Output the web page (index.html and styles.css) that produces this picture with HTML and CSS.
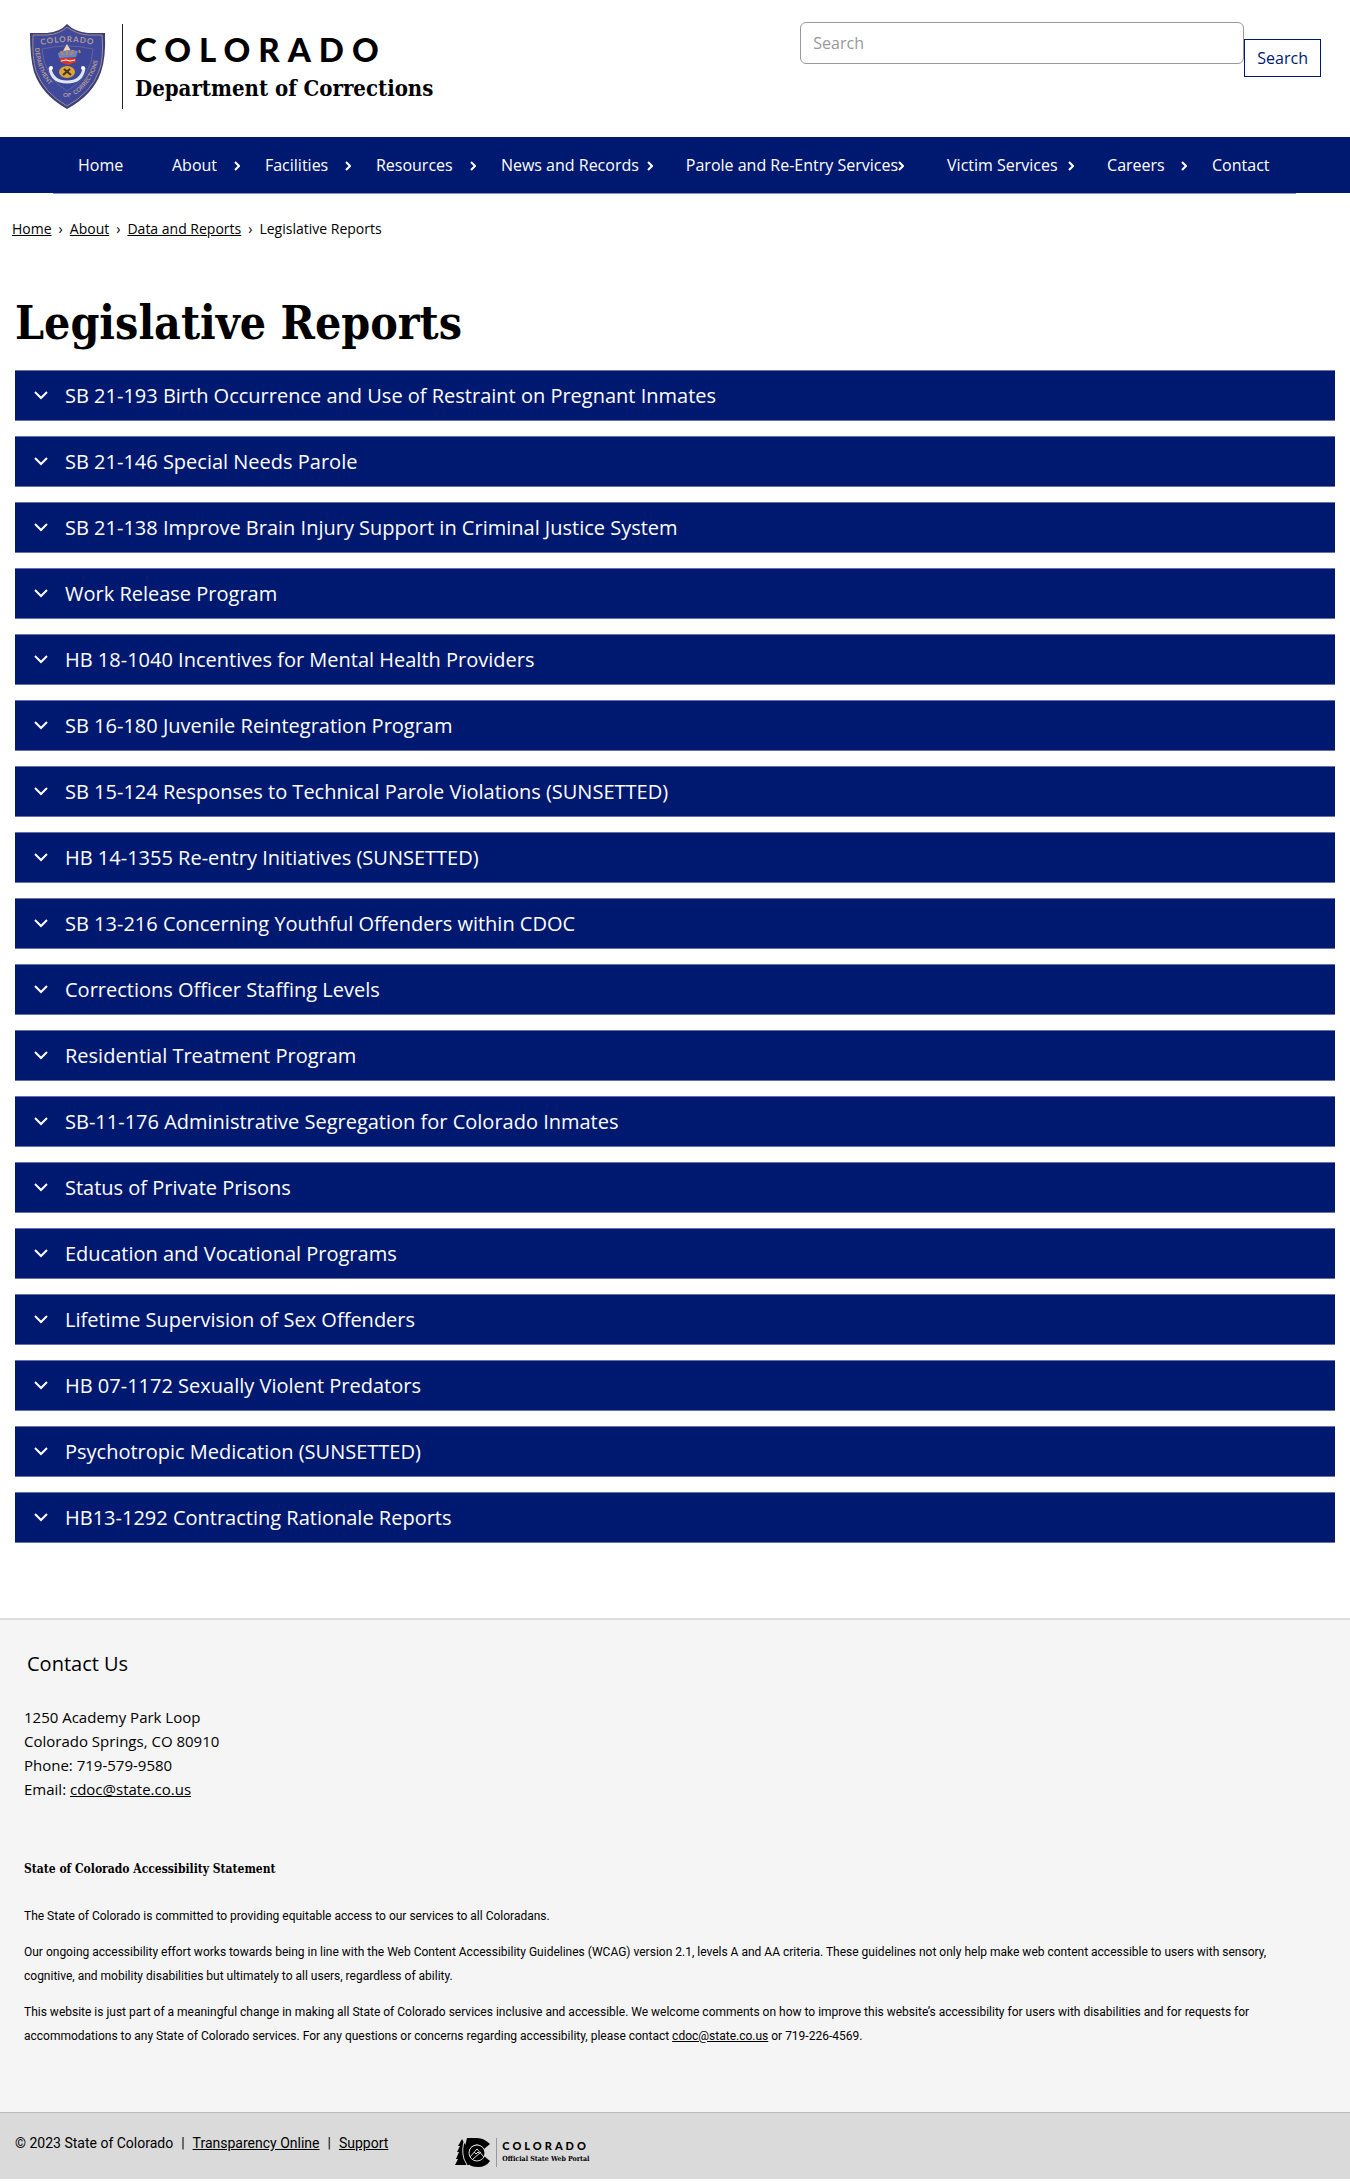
FILE: index.html
```html
<!DOCTYPE html>
<html lang="en">
<head>
<meta charset="utf-8">
<meta name="viewport" content="width=device-width, initial-scale=1">
<title>Legislative Reports | Department of Corrections</title>
<link rel="stylesheet" href="styles.css">
</head>
<body>
<svg width="0" height="0" class="sprite" aria-hidden="true">
  <symbol id="right" viewBox="0 0 6 10"><path d="M1 1l4 4-4 4" fill="none" stroke="currentColor" stroke-width="2"/></symbol>
  <symbol id="down" viewBox="0 0 14 9"><path d="M1 1l6 6 6-6" fill="none" stroke="currentColor" stroke-width="2"/></symbol>
</svg>

<header class="header">
  <a class="brand" href="#">
    <svg class="shield" viewBox="30 24 76 86" aria-hidden="true">
      <defs>
        <path id="arc-top" d="M41 45Q67 39 95 45"/>
        <path id="arc-left" d="M35 48Q37 79 61 95"/>
        <path id="arc-right" d="M75 95Q98 79 100 47"/>
      </defs>
      <path d="M67 24Q75 32 88 33H105Q106 58 101 72Q93 95 67 109Q42 95 34 72Q30 58 30 33H47Q60 32 67 24Z" fill="#3b3f7d"/>
      <path d="M67 27Q76 34 88 35H102Q104 58 99 71Q91 93 67 106Q44 93 36 71Q32 58 33 35H47Q60 34 67 27Z" fill="#3f4a9d" stroke="#a58a86" stroke-width="1"/>
      <path d="M42 49Q67 43 93 49Q92 77 67 91Q44 77 42 49Z" fill="#3d4799" stroke="#68629b" stroke-width="1"/>
      <g class="shield-text">
        <text><textPath href="#arc-top">COLORADO</textPath></text>
        <text class="shield-small"><textPath href="#arc-left">DEPARTMENT</textPath></text>
        <text class="shield-small"><textPath href="#arc-right">CORRECTIONS</textPath></text>
        <text class="shield-small" x="63" y="97">OF</text>
      </g>
      <path d="M67 44l4 7h-8z" fill="#e8d7ba"/>
      <path d="M58 53q9-5 20-2l-2 6-17 1z" fill="#6f86bd"/>
      <path d="M61 51l2 4M67 50v5M73 50l-2 5M79 50l1 3" stroke="#c9814f" stroke-width="2"/>
      <path d="M60 58h16v4l-8 3-8-3z" fill="#d4392e"/>
      <path d="M61 61l5-1 4 1 5-1" stroke="#fff" stroke-width="1" fill="none"/>
      <path d="M50 68Q52 82 67 82Q82 82 84 68" fill="none" stroke="#dfe7f3" stroke-width="3"/>
      <circle cx="51" cy="68" r="2" fill="#fff"/><circle cx="83" cy="68" r="2" fill="#fff"/>
      <ellipse cx="67" cy="72" rx="8" ry="6" fill="#dda436"/>
      <path d="M63 75l7-6M71 75l-7-6" stroke="#40332d" stroke-width="2"/>
    </svg>
    <span class="brand-text">
      <span class="brand-state">COLORADO</span>
      <span class="brand-name">Department of Corrections</span>
    </span>
  </a>
  <form class="search" role="search">
    <input class="search-input" type="search" placeholder="Search" aria-label="Search">
    <button class="search-button" type="submit">Search</button>
  </form>
</header>

<nav class="nav" aria-label="Main">
  <ul class="nav-list">
    <li><a href="#">Home</a></li>
    <li><a href="#">About<svg><use href="#right"/></svg></a></li>
    <li><a href="#">Facilities<svg><use href="#right"/></svg></a></li>
    <li><a href="#">Resources<svg><use href="#right"/></svg></a></li>
    <li class="nav-long"><a href="#">News and Records<svg><use href="#right"/></svg></a></li>
    <li class="nav-longest"><a href="#">Parole and Re-Entry Services<svg><use href="#right"/></svg></a></li>
    <li class="nav-long"><a href="#">Victim Services<svg><use href="#right"/></svg></a></li>
    <li><a href="#">Careers<svg><use href="#right"/></svg></a></li>
    <li><a href="#">Contact</a></li>
  </ul>
</nav>

<nav class="breadcrumb" aria-label="Breadcrumb">
  <a href="#">Home</a><span>›</span><a href="#">About</a><span>›</span><a href="#">Data and Reports</a><span>›</span>Legislative Reports
</nav>

<main class="main">
  <h1>Legislative Reports</h1>
  <div class="accordion">
    <button type="button" aria-expanded="false"><svg><use href="#down"/></svg>SB 21-193 Birth Occurrence and Use of Restraint on Pregnant Inmates</button>
    <button type="button" aria-expanded="false"><svg><use href="#down"/></svg>SB 21-146 Special Needs Parole</button>
    <button type="button" aria-expanded="false"><svg><use href="#down"/></svg>SB 21-138 Improve Brain Injury Support in Criminal Justice System</button>
    <button type="button" aria-expanded="false"><svg><use href="#down"/></svg>Work Release Program</button>
    <button type="button" aria-expanded="false"><svg><use href="#down"/></svg>HB 18-1040 Incentives for Mental Health Providers</button>
    <button type="button" aria-expanded="false"><svg><use href="#down"/></svg>SB 16-180 Juvenile Reintegration Program</button>
    <button type="button" aria-expanded="false"><svg><use href="#down"/></svg>SB 15-124 Responses to Technical Parole Violations (SUNSETTED)</button>
    <button type="button" aria-expanded="false"><svg><use href="#down"/></svg>HB 14-1355 Re-entry Initiatives (SUNSETTED)</button>
    <button type="button" aria-expanded="false"><svg><use href="#down"/></svg>SB 13-216 Concerning Youthful Offenders within CDOC</button>
    <button type="button" aria-expanded="false"><svg><use href="#down"/></svg>Corrections Officer Staffing Levels</button>
    <button type="button" aria-expanded="false"><svg><use href="#down"/></svg>Residential Treatment Program</button>
    <button type="button" aria-expanded="false"><svg><use href="#down"/></svg>SB-11-176 Administrative Segregation for Colorado Inmates</button>
    <button type="button" aria-expanded="false"><svg><use href="#down"/></svg>Status of Private Prisons</button>
    <button type="button" aria-expanded="false"><svg><use href="#down"/></svg>Education and Vocational Programs</button>
    <button type="button" aria-expanded="false"><svg><use href="#down"/></svg>Lifetime Supervision of Sex Offenders</button>
    <button type="button" aria-expanded="false"><svg><use href="#down"/></svg>HB 07-1172 Sexually Violent Predators</button>
    <button type="button" aria-expanded="false"><svg><use href="#down"/></svg>Psychotropic Medication (SUNSETTED)</button>
    <button type="button" aria-expanded="false"><svg><use href="#down"/></svg>HB13-1292 Contracting Rationale Reports</button>
  </div>
</main>

<footer>
  <div class="footer">
    <h2>Contact Us</h2>
    <address>1250 Academy Park Loop<br>Colorado Springs, CO 80910<br>Phone: 719-579-9580<br>Email: <a href="mailto:cdoc@state.co.us">cdoc@state.co.us</a></address>
    <section class="statement">
      <h3>State of Colorado Accessibility Statement</h3>
      <p>The State of Colorado is committed to providing equitable access to our services to all Coloradans.</p>
      <p>Our ongoing accessibility effort works towards being in line with the Web Content Accessibility Guidelines (WCAG) version 2.1, levels A and AA criteria. These guidelines not only help make web content accessible to users with sensory, cognitive, and mobility disabilities but ultimately to all users, regardless of ability.</p>
      <p>This website is just part of a meaningful change in making all State of Colorado services inclusive and accessible. We welcome comments on how to improve this website’s accessibility for users with disabilities and for requests for accommodations to any State of Colorado services. For any questions or concerns regarding accessibility, please contact <a href="mailto:cdoc@state.co.us">cdoc@state.co.us</a> or 719-226-4569.</p>
    </section>
  </div>
  <div class="legal">
    <p class="legal-links">© 2023 State of Colorado<span>|</span><a href="#">Transparency Online</a><span>|</span><a href="#">Support</a></p>
    <a class="portal" href="#">
      <svg class="portal-mark" viewBox="0 0 36 29" aria-hidden="true">
        <path d="M7 1l-4 7h2l-3 6h2l-3 7h2L0 27h14l2-10z"/>
        <path d="M35 6Q29 0 22 0H12L9 12l2 12Q15 29 23 29Q31 29 35 23L29 18A8 8 0 1 1 29 11Z"/>
        <path d="M10 1Q6 11 9 21l3 6" fill="none" stroke="#dadada" stroke-width="1"/>
        <circle cx="22" cy="15" r="8" stroke="#dadada" stroke-width="1"/>
        <path d="M15 19l7-8 7 8M19 14l2 2 2-2 2 2M18 21l8-7" fill="none" stroke="#dadada" stroke-width="1"/>
      </svg>
      <span class="portal-text"><span class="portal-state">COLORADO</span><span class="portal-name">Official State Web Portal</span></span>
    </a>
  </div>
</footer>
</body>
</html>
```
FILE: styles.css
```css
:root {
  --blue: #001970;
  --sans: "Open Sans", sans-serif;
  --slab: "DejaVu Serif Condensed", "DejaVu Serif", serif;
}

* { box-sizing: border-box; }

body {
  margin: 0;
  background: #fff;
  color: #000;
  font: 16px/24px var(--sans);
}

a { color: inherit; }
h1, h2, h3, p, ul { margin: 0; }
.sprite { display: block; }

/* Header */
.header {
  display: flex;
  justify-content: space-between;
  align-items: flex-start;
  padding: 22px 29px 27px 30px;
}

.brand {
  display: flex;
  gap: 16px;
  margin-top: 2px;
  text-decoration: none;
}

.shield { width: 76px; height: 86px; }

.shield-text {
  fill: #b89c90;
  font: 700 8px "Lato", sans-serif;
  letter-spacing: 1px;
}

.shield-small { font-size: 6px; letter-spacing: 0; }

.brand-text {
  display: flex;
  flex-direction: column;
  height: 85px;
  padding: 6px 0 0 12px;
  border-left: 1px solid #222;
}

.brand-state {
  font: 900 33px/38px "Lato", sans-serif;
  letter-spacing: 8px;
}

.brand-name {
  margin-top: 4px;
  font: 700 22px/32px var(--slab);
}

.search {
  display: flex;
  align-items: flex-start;
}

.search-input {
  width: 444px;
  height: 42px;
  padding: 0 12px;
  border: 1px solid #999;
  border-radius: 6px;
  background: #fff;
  font: 16px/24px var(--sans);
}

.search-input::placeholder { color: #999; }

.search-button {
  height: 38px;
  margin-top: 17px;
  padding: 0 12px;
  border: 1px solid var(--blue);
  background: #fff;
  color: var(--blue);
  font: 16px/24px var(--sans);
}

/* Main navigation */
.nav {
  height: 56px;
  padding: 0 54px 0 53px;
  background: var(--blue);
}

.nav-list {
  display: grid;
  grid-template-columns: 94fr 93fr 111fr 125fr 185fr 261fr 160fr 105fr 109fr;
  height: 57px;
  padding: 0;
  border-bottom: 1px solid #8c93c0;
  list-style: none;
}

.nav-list a {
  display: flex;
  align-items: center;
  justify-content: space-between;
  height: 56px;
  padding-left: 25px;
  color: #fff;
  text-decoration: none;
  white-space: nowrap;
}

.nav-long a { padding-right: 8px; }
.nav-longest a { padding-right: 18px; }
.nav-list svg { flex: none; width: 6px; height: 10px; margin-top: 2px; }

.breadcrumb {
  padding: 26px 12px 0;
  font-size: 14px;
  line-height: 20px;
}

.breadcrumb span { margin: 0 7px; }

/* Accordion list */
.main { padding: 56px 15px 75px; }

h1 {
  margin-bottom: 19px;
  font: 700 46px/56px var(--slab);
}

.accordion {
  display: flex;
  flex-direction: column;
  gap: 15px;
}

.accordion button {
  display: flex;
  align-items: center;
  gap: 17px;
  min-height: 51px;
  padding: 0 19px;
  border: 0 solid #6672a8;
  border-width: 1px 0;
  background: var(--blue);
  color: #fff;
  font: 20px/28px var(--sans);
  text-align: left;
}

.accordion svg { flex: none; width: 14px; height: 9px; }

/* Footer */
.footer {
  padding: 30px 50px 52px 24px;
  border-top: 2px solid #ddd;
  background: #f5f5f5;
}

h2 {
  padding-left: 3px;
  font: 400 20px/28px var(--sans);
}

address {
  margin-top: 27px;
  font-size: 15px;
  font-style: normal;
}

.statement {
  margin-top: 56px;
  font: 12px/24px "Roboto", sans-serif;
}

.statement h3 {
  margin-bottom: 23px;
  font: 700 12px/24px var(--slab);
}

.statement p { margin-bottom: 12px; }

.legal {
  display: flex;
  align-items: flex-start;
  gap: 67px;
  padding: 18px 15px 12px;
  border-top: 1px solid #bbb;
  background: #dadada;
}

.legal-links { font: 14px/24px "Roboto", sans-serif; }
.legal-links span { margin: 0 8px; }

.portal {
  display: flex;
  gap: 5px;
  margin-top: 7px;
  text-decoration: none;
}

.portal-mark { width: 36px; height: 29px; }

.portal-text {
  display: flex;
  flex-direction: column;
  padding: 2px 0 0 5px;
  border-left: 1px solid #999;
}

.portal-state {
  font: 900 11px/12px "Lato", sans-serif;
  letter-spacing: 3px;
}

.portal-name { font: 700 7px/14px var(--slab); }
```
